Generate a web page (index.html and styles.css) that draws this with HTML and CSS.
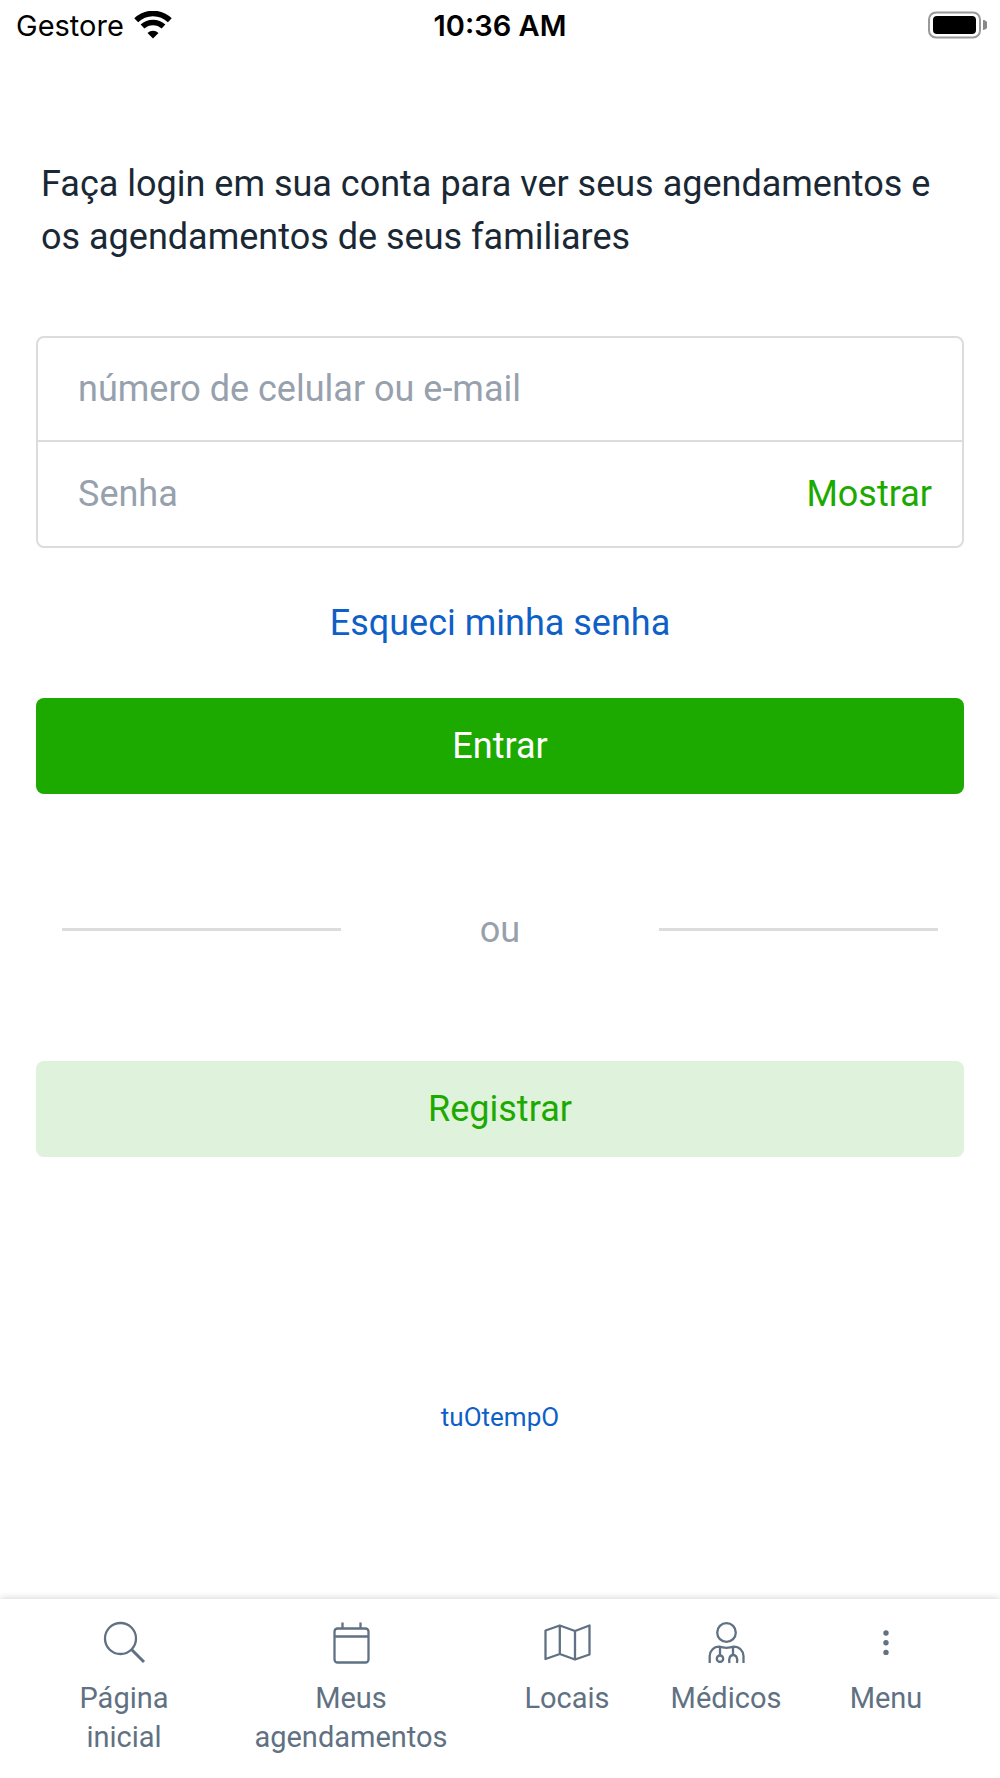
FILE: index.html
```html
<!DOCTYPE html>
<html lang="pt-BR">
<head>
<meta charset="utf-8">
<meta name="viewport" content="width=device-width, initial-scale=1">
<title>Login</title>
<link rel="stylesheet" href="styles.css">
</head>
<body>
<header class="status">
  <div class="carrier"><span>Gestore</span>
    <svg width="38" height="28" viewBox="0 0 38 28" aria-hidden="true"><path d="M19 27.500l-5.500-5.500a8 8 0 0 1 11 0z"/><path d="M8.500 16.500a15.500 15.500 0 0 1 21 0M2.200 10.300a24 24 0 0 1 33.600 0" transform="translate(0 -1)" fill="none" stroke="#000" stroke-width="5.500"/></svg>
  </div>
  <time class="clock">10:36 AM</time>
  <svg class="battery" width="60" height="28" viewBox="0 0 60 28" aria-hidden="true"><rect x="2" y="1.500" width="51" height="25" rx="7" fill="none" stroke="#999" stroke-width="2"/><rect x="6" y="5" width="43" height="18" rx="4"/><path d="M56 9a5 5 0 0 1 0 10z" fill="#888"/></svg>
</header>
<main class="login">
  <h1 class="intro">Faça login em sua conta para ver seus agendamentos e os agendamentos de seus familiares</h1>
  <form class="form">
    <div class="fields">
      <div class="field"><input class="input" type="text" aria-label="número de celular ou e-mail" placeholder="número de celular ou e-mail"></div>
      <div class="field"><input class="input" type="password" aria-label="Senha" placeholder="Senha"><button class="show" type="button">Mostrar</button></div>
    </div>
    <a class="forgot" href="#">Esqueci minha senha</a>
    <button class="button" type="submit">Entrar</button>
    <div class="divider"><span>ou</span></div>
    <button class="button button-light" type="button">Registrar</button>
  </form>
  <a class="brand" href="#">tuOtempO</a>
</main>
<nav class="tabs">
  <a class="tab" href="#"><svg width="48" height="48" viewBox="0 0 48 48" aria-hidden="true"><circle cx="20.500" cy="20.500" r="15.500"/><path d="M31.500 31.500l12.500 12.500" stroke-width="3"/></svg><span>Página<br>inicial</span></a>
  <a class="tab" href="#"><svg width="48" height="48" viewBox="0 0 48 48" aria-hidden="true"><rect x="7.500" y="10.500" width="34" height="34" rx="3"/><path d="M7.500 18.500h34M15.500 4.500v6M33.500 4.500v6"/></svg><span>Meus<br>agendamentos</span></a>
  <a class="tab" href="#"><svg width="48" height="48" viewBox="0 0 48 48" aria-hidden="true"><path d="M2.500 12.500l14.300-5 15.200 5.500 14.500-5.500v29l-14.500 5-15.200-5.500-14.300 5zM16.800 7.500v28.500M32 13v28.500"/></svg><span>Locais</span></a>
  <a class="tab" href="#"><svg width="48" height="48" viewBox="0 0 48 48" aria-hidden="true"><circle cx="24.500" cy="14.500" r="9.300"/><path d="M7.700 45v-7c0-5 4-9.300 9.500-9.300 5 1.500 9.600 1.500 14.600 0 5.500 0 9.700 4.300 9.700 9.300v7M18 29v8M31 29v8M27.500 45c-1-4.500.5-8 3.700-8s4.800 3.500 3.700 8"/><circle cx="18" cy="40.700" r="3.200"/></svg><span>Médicos</span></a>
  <a class="tab" href="#"><svg width="48" height="48" viewBox="0 0 48 48" aria-hidden="true"><g class="dots"><circle cx="24" cy="15" r="2.700"/><circle cx="24" cy="24.700" r="2.700"/><circle cx="24" cy="34.400" r="2.700"/></g></svg><span>Menu</span></a>
</nav>
</body>
</html>
```
FILE: styles.css
```css
* { box-sizing: border-box; }
body { margin: 0; min-height: 100vh; display: flex; flex-direction: column; background: #fff; color: #1a2835; font-family: Roboto, sans-serif; font-size: 36px; }
a { text-decoration: none; }
button { border: 0; font: inherit; cursor: pointer; }
.status { display: grid; grid-template-columns: 1fr auto 1fr; align-items: center; height: 50px; padding: 0 13px; color: #000; font-family: Inter, sans-serif; font-size: 29px; }
.carrier { display: flex; align-items: center; gap: 10px; padding-left: 3px; }
.clock { font-weight: 600; }
.battery { justify-self: end; }
.login { flex: 1; display: flex; flex-direction: column; padding: 108px 36px 0; }
.intro { margin: 0; padding: 0 5px; font-size: 36px; line-height: 53px; font-weight: 400; }
.form { display: flex; flex-direction: column; margin-top: 72px; }
.fields { border: 2px solid #dcdcdc; border-radius: 8px; }
.field { display: flex; align-items: center; height: 102px; padding: 0 30px 0 40px; }
.field + .field { border-top: 2px solid #dcdcdc; height: 106px; }
.input { flex: 1; min-width: 0; height: 60px; padding: 0; border: 0; outline: 0; background: none; font: inherit; color: inherit; }
.input::placeholder { color: #97a1ad; opacity: 1; }
.show { padding: 0; background: none; color: #1ca900; }
.forgot { align-self: center; margin: 50px 0; line-height: 50px; color: #0f5fc8; }
.button { height: 96px; border-radius: 8px; background: #1ca900; color: #fff; }
.button-light { background: #dff2db; color: #1ca900; }
.divider { display: grid; grid-template-columns: 7fr 8fr 7fr; padding: 4px 26px 0; align-items: center; text-align: center; height: 267px; color: #97a1ad; }
.divider::before, .divider::after { content: ""; height: 3px; background: #dcdcdc; }
.brand { align-self: center; margin-top: 240px; font-size: 26px; line-height: 40px; color: #0f5fc8; }
.tabs { display: grid; grid-template-columns: 160fr 294fr 138fr 180fr 140fr; min-height: 179px; padding: 19px 44px 0; background: #fff; box-shadow: 0 0 8px rgba(0, 0, 0, .2); }
.tab { display: flex; flex-direction: column; align-items: center; gap: 13px; color: #5f7183; font-size: 29px; line-height: 39px; text-align: center; }
.tab svg { fill: none; stroke: #5f7183; stroke-width: 2.300; stroke-linejoin: round; }
.dots { fill: #5f7183; stroke: none; }
```
